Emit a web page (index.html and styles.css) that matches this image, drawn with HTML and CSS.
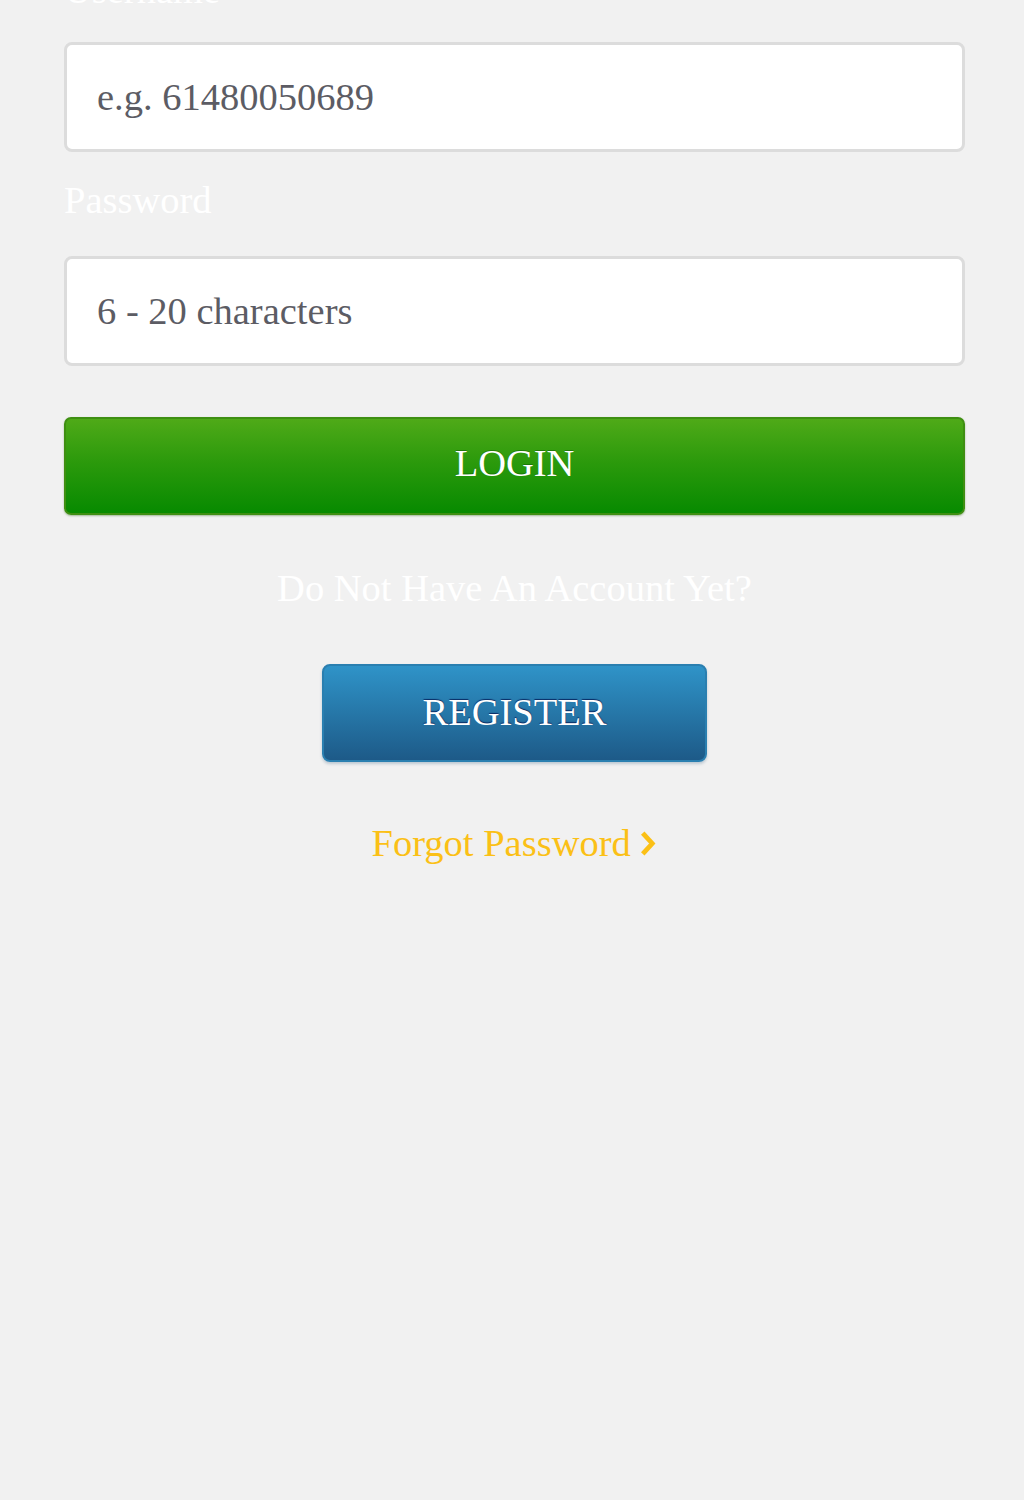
FILE: index.html
```html
<!DOCTYPE html>
<html lang="en">
<head>
<meta charset="utf-8">
<title>Login</title>
<link rel="stylesheet" href="styles.css">
</head>
<body>
<main class="page">
  <form class="login">
    <label class="label label-first" for="user">Username</label>
    <input class="field" id="user" type="text" placeholder="e.g. 61480050689">
    <label class="label" for="pass">Password</label>
    <input class="field" id="pass" type="password" placeholder="6 - 20 characters">
    <button class="btn-login" type="button">LOGIN</button>
  </form>
  <p class="no-account">Do Not Have An Account Yet?</p>
  <div class="register-row">
    <button class="btn-register" type="button">REGISTER</button>
  </div>
  <a class="forgot" href="#">Forgot Password <svg class="chev" viewBox="0 0 20 30" width="19" height="29" aria-hidden="true"><path d="M5 4 L15 15 L5 26" fill="none" stroke="currentColor" stroke-width="5" stroke-linejoin="miter"/></svg></a>
</main>
</body>
</html>
```

FILE: styles.css
```css
html, body {
  margin: 0;
  padding: 0;
  background: #f1f1f1;
}

body {
  font-family: "Liberation Serif", "Times New Roman", serif;
  font-size: 38.5px;
  min-height: 1500px;
}

.page {
  width: 901px;
  padding-left: 64px;
  margin-top: -32px;
}

.login {
  display: flex;
  flex-direction: column;
}

.label {
  display: block;
  color: #ffffff;
  font-size: 38.5px;
  line-height: 44px;
  margin-top: 26px;
  margin-bottom: 34px;
}

.label-first {
  margin-top: 0;
  margin-bottom: 30px;
}

.field {
  box-sizing: border-box;
  width: 901px;
  height: 110px;
  border: 3px solid #dcdcdc;
  border-radius: 8px;
  background: #ffffff;
  padding: 0 30px;
  font-family: "Liberation Serif", "Times New Roman", serif;
  font-size: 38.5px;
  color: #555;
  outline: none;
}

.field::placeholder {
  color: #5c5c64;
  opacity: 1;
}

.btn-login {
  margin-top: 51px;
  box-sizing: border-box;
  width: 901px;
  height: 98px;
  border: 2px solid #3f8f12;
  border-radius: 7px;
  background: linear-gradient(to bottom, #4faa18 0%, #2c9a0c 45%, #078a00 100%);
  color: #ffffff;
  font-family: "Liberation Serif", "Times New Roman", serif;
  font-size: 38.5px;
  text-shadow: 0 -1px 0 rgba(0, 60, 0, 0.35);
  box-shadow: 0 1px 2px rgba(40, 100, 20, 0.4);
  padding: 0 0 6px;
  cursor: pointer;
}

.no-account {
  margin: 51px 0 0;
  text-align: center;
  color: #ffffff;
  font-size: 38.5px;
  line-height: 44px;
}

.register-row {
  display: flex;
  justify-content: center;
  margin-top: 54px;
}

.btn-register {
  box-sizing: border-box;
  width: 385px;
  height: 98px;
  border: 2px solid #2a7fb0;
  border-radius: 8px;
  background: linear-gradient(to bottom, #2f93c8 0%, #2677a8 50%, #1d5a88 100%);
  color: #ffffff;
  font-family: "Liberation Serif", "Times New Roman", serif;
  font-size: 38.5px;
  text-shadow: 0 -1px 1px rgba(0, 20, 80, 0.8);
  box-shadow: 0 2px 3px rgba(30, 80, 120, 0.25);
  padding: 0 0 2px;
  cursor: pointer;
}

.forgot {
  display: block;
  margin-top: 59px;
  text-align: center;
  color: #fbc016;
  font-size: 38.5px;
  line-height: 44px;
  text-decoration: none;
}

.chev {
  vertical-align: -2px;
  margin-left: -2px;
}
```
